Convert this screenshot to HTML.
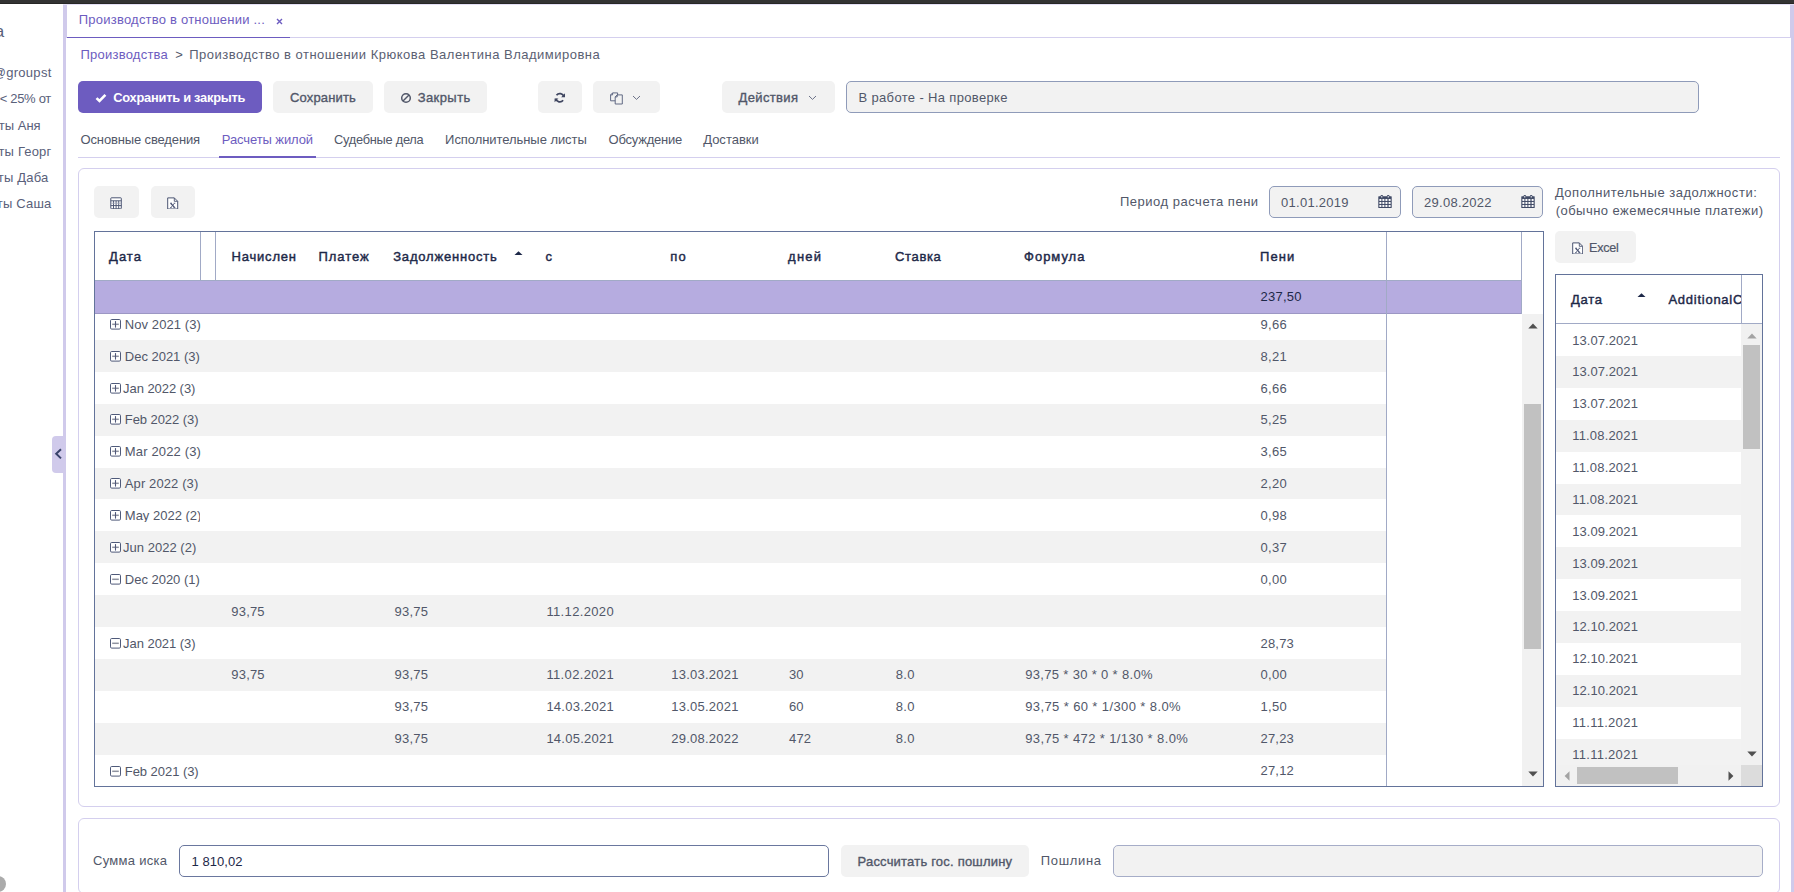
<!DOCTYPE html>
<html lang="ru"><head><meta charset="utf-8"><title>Производство</title>
<style>
html,body{margin:0;padding:0;background:#fff;}
html{width:1794px;height:892px;overflow:hidden;}
body{width:1794px;height:892px;position:relative;overflow:hidden;font-family:"Liberation Sans", sans-serif;}
div,span.t,svg{position:absolute;box-sizing:border-box;}
span.t{white-space:nowrap;display:block;}

</style></head><body>
<div style="left:0px;top:0px;width:1794px;height:3px;background:#333333;"></div>
<div style="left:0px;top:3px;width:1794px;height:1px;background:#272725;"></div>
<div style="left:63px;top:4px;width:4px;height:34px;background:#d0caeb;"></div>
<div style="left:63px;top:38px;width:3px;height:854px;background:#d0caeb;"></div>
<div style="left:1790px;top:4px;width:4px;height:33px;background:#d0caeb;"></div>
<div style="left:1791px;top:37px;width:3px;height:855px;background:#d0caeb;"></div>
<div style="left:63px;top:4px;width:1731px;height:1px;background:#e4e0f5;"></div>
<div style="left:67px;top:37px;width:1724px;height:1px;background:#d4cfee;"></div>
<div style="left:67px;top:37px;width:223px;height:1px;background:#6d5cc0;"></div>
<div style="left:52px;top:436px;width:11px;height:37px;background:#d0caeb;border-radius:4px 0 0 4px;"></div>
<svg style="left:54px;top:448px;" width="9" height="12" viewBox="0 0 9 12"><path d="M7 1.2 L2.2 5.8 L7 10.4" fill="none" stroke="#38426a" stroke-width="2"/></svg>
<div style="left:-10px;top:876px;width:16.4px;height:16px;background:#ababab;border-radius:8px;"></div>
<div style="left:0;top:4px;width:52px;height:500px;overflow:hidden;">
<span class="t" style="right:47.8px;top:19.23px;font-size:16.5px;line-height:16.5px;letter-spacing:0px;color:#59607a;">а</span>
<span class="t" style="right:0.40000000000000285px;top:62.00px;font-size:13px;line-height:13px;letter-spacing:0.3px;color:#59607a;">@groupst</span>
<span class="t" style="right:1.0000000000000029px;top:88.00px;font-size:13px;line-height:13px;letter-spacing:-0.3px;color:#59607a;">&lt; 25% от</span>
<span class="t" style="right:11.399999999999999px;top:115.00px;font-size:13px;line-height:13px;letter-spacing:0px;color:#59607a;">ты Аня</span>
<span class="t" style="right:0.5000000000000029px;top:141.00px;font-size:13px;line-height:13px;letter-spacing:0.2px;color:#59607a;">ты Георг</span>
<span class="t" style="right:3.5000000000000027px;top:167.00px;font-size:13px;line-height:13px;letter-spacing:0.2px;color:#59607a;">ты Даба</span>
<span class="t" style="right:0.5000000000000029px;top:193.00px;font-size:13px;line-height:13px;letter-spacing:0.2px;color:#59607a;">ты Саша</span>
</div>
<svg style="left:276px;top:18px;" width="7" height="7" viewBox="0 0 7 7"><path d="M1 1 L6 6 M6 1 L1 6" stroke="#6d5cc0" stroke-width="1.4" fill="none"/></svg>
<div style="left:78px;top:81px;width:184px;height:32px;background:#6d5cc0;border-radius:5px;"></div>
<svg style="left:94.6px;top:92.6px;" width="12" height="10" viewBox="0 0 12 10"><path d="M1.5 5.1 L4.5 8 L10.4 1.9" fill="none" stroke="#fff" stroke-width="2.6"/></svg>
<div style="left:273px;top:81px;width:100px;height:32px;background:#f2f2f2;border-radius:5px;"></div>
<div style="left:384px;top:81px;width:103px;height:32px;background:#f2f2f2;border-radius:5px;"></div>
<svg style="left:400px;top:92px;" width="12" height="12" viewBox="0 0 12 12"><circle cx="6" cy="6" r="4.3" fill="none" stroke="#515769" stroke-width="1.5"/><path d="M3 9 L9 3" stroke="#515769" stroke-width="1.5"/></svg>
<div style="left:538px;top:81px;width:44px;height:32px;background:#f2f2f2;border-radius:5px;"></div>
<svg style="left:554.3px;top:91.8px;" width="11.6" height="11.6" viewBox="0 0 12 12"><g fill="none" stroke="#3f4660" stroke-width="1.85"><path d="M10.2 5.0 A4.3 4.3 0 0 0 2.6 3.4"/><path d="M1.8 7.0 A4.3 4.3 0 0 0 9.4 8.6"/></g><path d="M11.4 1.4 V5.4 H7.4 Z M0.6 10.6 V6.6 H4.6 Z" fill="#3f4660"/></svg>
<div style="left:593px;top:81px;width:67px;height:32px;background:#f2f2f2;border-radius:5px;"></div>
<svg style="left:610px;top:91.6px;" width="13" height="13" viewBox="0 0 13 13"><g fill="#f2f2f2" stroke="#5b6380" stroke-width="0.95"><path d="M2.6 0.9 H7.6 V8.8 H0.6 V2.9 Z"/><path d="M0.6 2.9 H2.6 V0.9" fill="none"/><path d="M7.2 2.9 H12.3 V12 H5.2 V4.9 Z"/><path d="M5.2 4.9 H7.2 V2.9" fill="none"/></g></svg>
<svg style="left:632.3px;top:95.2px;" width="9" height="6" viewBox="0 0 9 6"><path d="M1 1 L4.5 4.4 L8 1" fill="none" stroke="#6b7188" stroke-width="1"/></svg>
<div style="left:722px;top:81px;width:113px;height:32px;background:#f2f2f2;border-radius:5px;"></div>
<svg style="left:808.3px;top:95.2px;" width="9" height="6" viewBox="0 0 9 6"><path d="M1 1 L4.5 4.4 L8 1" fill="none" stroke="#6b7188" stroke-width="1"/></svg>
<div style="left:846px;top:81px;width:853px;height:32px;background:#f2f2f2;border:1px solid #8f9bb9;border-radius:5px;"></div>
<div style="left:78px;top:157px;width:1702px;height:1px;background:#d4cfee;"></div>
<div style="left:219px;top:156.4px;width:97px;height:1.6px;background:#6d5cc0;"></div>
<div style="left:78px;top:168px;width:1702px;height:639px;border:1px solid #d4cfee;border-radius:6px;"></div>
<div style="left:78px;top:818px;width:1702px;height:74px;overflow:hidden;"><div style="left:0;top:0;width:1702px;height:76px;border:1px solid #d4cfee;border-radius:6px;"></div></div>
<div style="left:94px;top:186px;width:45px;height:32px;background:#f2f2f2;border-radius:5px;"></div>
<svg style="left:110px;top:196.7px;" width="12" height="12.4" viewBox="0 0 12 12.4"><rect x="0.8" y="0.8" width="10.5" height="11" rx="0.6" fill="#fff" stroke="#4b5472" stroke-width="1"/><path d="M0.8 3.8 H11.3 M0.8 8.6 H11.3 M3.5 3.8 V11.8 M6.1 3.8 V11.8 M8.7 3.8 V11.8" stroke="#4b5472" stroke-width="0.95" fill="none"/><path d="M0.8 6.2 H11.3" stroke="#9ea4b8" stroke-width="0.8" fill="none"/></svg>
<div style="left:151px;top:186px;width:44px;height:32px;background:#f2f2f2;border-radius:5px;"></div>
<svg style="left:167px;top:196.5px;" width="11.5" height="12.5" viewBox="0 0 11.5 12.5"><path d="M0.7 0.9 H7.3 L10.7 4.3 V12 H0.7 Z" fill="#fff" stroke="#4b5472" stroke-width="1"/><path d="M7.3 0.9 V4.3 H10.7" fill="none" stroke="#4b5472" stroke-width="0.9"/><path d="M3.7 6.2 L7.7 10.6" stroke="#4b5472" stroke-width="1.3" fill="none"/><path d="M7.6 6.2 L3.8 10.6" stroke="#4b5472" stroke-width="0.8" fill="none"/><path d="M3 6.2 H5 M6.6 6.2 H8.4 M3 10.6 H4.8 M6.4 10.6 H8.4" stroke="#4b5472" stroke-width="0.7" fill="none"/></svg>
<div style="left:1269px;top:186px;width:132px;height:32px;background:#f2f2f2;border:1px solid #8f9bb9;border-radius:5px;"></div>
<div style="left:1412px;top:186px;width:131px;height:32px;background:#f2f2f2;border:1px solid #8f9bb9;border-radius:5px;"></div>
<svg style="left:1378.3px;top:195px;" width="14" height="13" viewBox="0 0 14 13"><rect x="0.3" y="1.3" width="13.4" height="11.7" rx="0.5" fill="#3f4965"/><rect x="2.5" y="0" width="2.6" height="3.2" rx="1.2" fill="#3f4965"/><rect x="8.9" y="0" width="2.6" height="3.2" rx="1.2" fill="#3f4965"/><rect x="3.2" y="0.9" width="1.2" height="1.5" rx="0.5" fill="#f6f6f6"/><rect x="9.6" y="0.9" width="1.2" height="1.5" rx="0.5" fill="#f6f6f6"/><rect x="1.4" y="3.95" width="2" height="2" fill="#fcfcfc"/><rect x="4.4" y="3.95" width="2" height="2" fill="#fcfcfc"/><rect x="7.4" y="3.95" width="2" height="2" fill="#fcfcfc"/><rect x="10.6" y="3.95" width="2" height="2" fill="#fcfcfc"/><rect x="1.4" y="6.95" width="2" height="2" fill="#fcfcfc"/><rect x="4.4" y="6.95" width="2" height="2" fill="#fcfcfc"/><rect x="7.4" y="6.95" width="2" height="2" fill="#fcfcfc"/><rect x="10.6" y="6.95" width="2" height="2" fill="#fcfcfc"/><rect x="1.4" y="9.95" width="2" height="2" fill="#fcfcfc"/><rect x="4.4" y="9.95" width="2" height="2" fill="#fcfcfc"/><rect x="7.4" y="9.95" width="2" height="2" fill="#fcfcfc"/><rect x="10.6" y="9.95" width="2" height="2" fill="#fcfcfc"/></svg>
<svg style="left:1520.8px;top:195px;" width="14" height="13" viewBox="0 0 14 13"><rect x="0.3" y="1.3" width="13.4" height="11.7" rx="0.5" fill="#3f4965"/><rect x="2.5" y="0" width="2.6" height="3.2" rx="1.2" fill="#3f4965"/><rect x="8.9" y="0" width="2.6" height="3.2" rx="1.2" fill="#3f4965"/><rect x="3.2" y="0.9" width="1.2" height="1.5" rx="0.5" fill="#f6f6f6"/><rect x="9.6" y="0.9" width="1.2" height="1.5" rx="0.5" fill="#f6f6f6"/><rect x="1.4" y="3.95" width="2" height="2" fill="#fcfcfc"/><rect x="4.4" y="3.95" width="2" height="2" fill="#fcfcfc"/><rect x="7.4" y="3.95" width="2" height="2" fill="#fcfcfc"/><rect x="10.6" y="3.95" width="2" height="2" fill="#fcfcfc"/><rect x="1.4" y="6.95" width="2" height="2" fill="#fcfcfc"/><rect x="4.4" y="6.95" width="2" height="2" fill="#fcfcfc"/><rect x="7.4" y="6.95" width="2" height="2" fill="#fcfcfc"/><rect x="10.6" y="6.95" width="2" height="2" fill="#fcfcfc"/><rect x="1.4" y="9.95" width="2" height="2" fill="#fcfcfc"/><rect x="4.4" y="9.95" width="2" height="2" fill="#fcfcfc"/><rect x="7.4" y="9.95" width="2" height="2" fill="#fcfcfc"/><rect x="10.6" y="9.95" width="2" height="2" fill="#fcfcfc"/></svg>
<div style="left:1555px;top:231px;width:81px;height:32px;background:#f2f2f2;border-radius:5px;"></div>
<svg style="left:1571.6px;top:241.5px;" width="11.5" height="12.5" viewBox="0 0 11.5 12.5"><path d="M0.7 0.9 H7.3 L10.7 4.3 V12 H0.7 Z" fill="#fff" stroke="#4b5472" stroke-width="1"/><path d="M7.3 0.9 V4.3 H10.7" fill="none" stroke="#4b5472" stroke-width="0.9"/><path d="M3.7 6.2 L7.7 10.6" stroke="#4b5472" stroke-width="1.3" fill="none"/><path d="M7.6 6.2 L3.8 10.6" stroke="#4b5472" stroke-width="0.8" fill="none"/><path d="M3 6.2 H5 M6.6 6.2 H8.4 M3 10.6 H4.8 M6.4 10.6 H8.4" stroke="#4b5472" stroke-width="0.7" fill="none"/></svg>
<div style="left:94px;top:231px;width:1450px;height:556px;border:1px solid #63739a;overflow:hidden;background:#fff;">
<div style="left:0.00px;top:108.00px;width:1291px;height:31.90px;background:#f2f2f2;"></div>
<div style="left:0.00px;top:171.80px;width:1291px;height:31.90px;background:#f2f2f2;"></div>
<div style="left:0.00px;top:235.60px;width:1291px;height:31.90px;background:#f2f2f2;"></div>
<div style="left:0.00px;top:299.40px;width:1291px;height:31.90px;background:#f2f2f2;"></div>
<div style="left:0.00px;top:363.20px;width:1291px;height:31.90px;background:#f2f2f2;"></div>
<div style="left:0.00px;top:427.00px;width:1291px;height:31.90px;background:#f2f2f2;"></div>
<div style="left:0.00px;top:490.80px;width:1291px;height:31.90px;background:#f2f2f2;"></div>
<div style="left:1427.00px;top:81.00px;width:22px;height:474.00px;background:#f1f1f1;"></div>
<div style="left:1429.00px;top:172.00px;width:17px;height:244.50px;background:#c1c1c1;"></div>
<div style="left:0.00px;top:0.00px;width:1427px;height:48.00px;background:#fff;"></div>
<div style="left:0.00px;top:48.00px;width:1427px;height:34.00px;background:#b6ace0;"></div>
<div style="left:1427.00px;top:0.00px;width:22px;height:81.50px;background:#fff;"></div>
<div style="left:0.00px;top:48.00px;width:1427px;height:1.00px;background:#a1aac6;"></div>
<div style="left:0.00px;top:81.00px;width:1427px;height:1.00px;background:#9c97c4;"></div>
<div style="left:105.00px;top:0.00px;width:1px;height:48.00px;background:#a1aac6;"></div>
<div style="left:120.00px;top:0.00px;width:1px;height:48.00px;background:#a1aac6;"></div>
<div style="left:1291.00px;top:0.00px;width:1px;height:555.00px;background:#a1aac6;"></div>
<div style="left:1426.00px;top:0.00px;width:1px;height:82.00px;background:#a1aac6;"></div>
</div>
<svg style="left:1527.5px;top:323px;" width="10" height="6" viewBox="0 0 10 6"><path d="M0.3 5.5 L5 0.6 L9.7 5.5 Z" fill="#505050"/></svg>
<svg style="left:1527.5px;top:771.2px;" width="10" height="6" viewBox="0 0 10 6"><path d="M0.3 0.5 L5 5.4 L9.7 0.5 Z" fill="#505050"/></svg>
<svg style="left:514px;top:250.6px;" width="9" height="4.5" viewBox="0 0 9 4.5"><path d="M0.2 4.3 L4.5 0.2 L8.8 4.3 Z" fill="#1d2848"/></svg>
<svg style="left:110px;top:319px;" width="11" height="11" viewBox="0 0 11 11"><rect x="0.5" y="0.5" width="10" height="9.6" rx="1.2" fill="#fff" stroke="#4f5a7a" stroke-width="1"/><path d="M2.2 5.3 H8.8" stroke="#8f93a0" stroke-width="1.5"/><path d="M5.5 2.1 V8.6" stroke="#50587a" stroke-width="1.1"/></svg>
<svg style="left:110px;top:351px;" width="11" height="11" viewBox="0 0 11 11"><rect x="0.5" y="0.5" width="10" height="9.6" rx="1.2" fill="#fff" stroke="#4f5a7a" stroke-width="1"/><path d="M2.2 5.3 H8.8" stroke="#8f93a0" stroke-width="1.5"/><path d="M5.5 2.1 V8.6" stroke="#50587a" stroke-width="1.1"/></svg>
<svg style="left:110px;top:383px;" width="11" height="11" viewBox="0 0 11 11"><rect x="0.5" y="0.5" width="10" height="9.6" rx="1.2" fill="#fff" stroke="#4f5a7a" stroke-width="1"/><path d="M2.2 5.3 H8.8" stroke="#8f93a0" stroke-width="1.5"/><path d="M5.5 2.1 V8.6" stroke="#50587a" stroke-width="1.1"/></svg>
<svg style="left:110px;top:414px;" width="11" height="11" viewBox="0 0 11 11"><rect x="0.5" y="0.5" width="10" height="9.6" rx="1.2" fill="#fff" stroke="#4f5a7a" stroke-width="1"/><path d="M2.2 5.3 H8.8" stroke="#8f93a0" stroke-width="1.5"/><path d="M5.5 2.1 V8.6" stroke="#50587a" stroke-width="1.1"/></svg>
<svg style="left:110px;top:446px;" width="11" height="11" viewBox="0 0 11 11"><rect x="0.5" y="0.5" width="10" height="9.6" rx="1.2" fill="#fff" stroke="#4f5a7a" stroke-width="1"/><path d="M2.2 5.3 H8.8" stroke="#8f93a0" stroke-width="1.5"/><path d="M5.5 2.1 V8.6" stroke="#50587a" stroke-width="1.1"/></svg>
<svg style="left:110px;top:478px;" width="11" height="11" viewBox="0 0 11 11"><rect x="0.5" y="0.5" width="10" height="9.6" rx="1.2" fill="#fff" stroke="#4f5a7a" stroke-width="1"/><path d="M2.2 5.3 H8.8" stroke="#8f93a0" stroke-width="1.5"/><path d="M5.5 2.1 V8.6" stroke="#50587a" stroke-width="1.1"/></svg>
<svg style="left:110px;top:510px;" width="11" height="11" viewBox="0 0 11 11"><rect x="0.5" y="0.5" width="10" height="9.6" rx="1.2" fill="#fff" stroke="#4f5a7a" stroke-width="1"/><path d="M2.2 5.3 H8.8" stroke="#8f93a0" stroke-width="1.5"/><path d="M5.5 2.1 V8.6" stroke="#50587a" stroke-width="1.1"/></svg>
<svg style="left:110px;top:542px;" width="11" height="11" viewBox="0 0 11 11"><rect x="0.5" y="0.5" width="10" height="9.6" rx="1.2" fill="#fff" stroke="#4f5a7a" stroke-width="1"/><path d="M2.2 5.3 H8.8" stroke="#8f93a0" stroke-width="1.5"/><path d="M5.5 2.1 V8.6" stroke="#50587a" stroke-width="1.1"/></svg>
<svg style="left:110px;top:574px;" width="11" height="11" viewBox="0 0 11 11"><rect x="0.5" y="0.5" width="10" height="9.6" rx="1.2" fill="#fff" stroke="#4f5a7a" stroke-width="1"/><path d="M2.2 5.3 H8.8" stroke="#8f93a0" stroke-width="1.5"/></svg>
<svg style="left:110px;top:638px;" width="11" height="11" viewBox="0 0 11 11"><rect x="0.5" y="0.5" width="10" height="9.6" rx="1.2" fill="#fff" stroke="#4f5a7a" stroke-width="1"/><path d="M2.2 5.3 H8.8" stroke="#8f93a0" stroke-width="1.5"/></svg>
<svg style="left:110px;top:766px;" width="11" height="11" viewBox="0 0 11 11"><rect x="0.5" y="0.5" width="10" height="9.6" rx="1.2" fill="#fff" stroke="#4f5a7a" stroke-width="1"/><path d="M2.2 5.3 H8.8" stroke="#8f93a0" stroke-width="1.5"/></svg>
<div style="left:1555px;top:274px;width:208px;height:513px;border:1px solid #63739a;overflow:hidden;background:#fff;">
<div style="left:0.00px;top:80.90px;width:185px;height:31.90px;background:#f2f2f2;"></div>
<div style="left:0.00px;top:144.70px;width:185px;height:31.90px;background:#f2f2f2;"></div>
<div style="left:0.00px;top:208.50px;width:185px;height:31.90px;background:#f2f2f2;"></div>
<div style="left:0.00px;top:272.30px;width:185px;height:31.90px;background:#f2f2f2;"></div>
<div style="left:0.00px;top:336.10px;width:185px;height:31.90px;background:#f2f2f2;"></div>
<div style="left:0.00px;top:399.90px;width:185px;height:31.90px;background:#f2f2f2;"></div>
<div style="left:0.00px;top:463.70px;width:185px;height:31.90px;background:#f2f2f2;"></div>
<div style="left:0.00px;top:48.00px;width:206px;height:1.00px;background:#a1aac6;"></div>
<div style="left:185.00px;top:0.00px;width:1px;height:48.00px;background:#a1aac6;"></div>
<div style="left:185.00px;top:49.00px;width:21px;height:463.00px;background:#f1f1f1;"></div>
<div style="left:187.00px;top:70.00px;width:17px;height:104.00px;background:#c1c1c1;"></div>
<div style="left:0.00px;top:490.00px;width:185px;height:22.00px;background:#f1f1f1;"></div>
<div style="left:185.00px;top:490.00px;width:21px;height:22.00px;background:#dcdcdc;"></div>
<div style="left:21.00px;top:492.00px;width:101px;height:17.00px;background:#c1c1c1;"></div>
</div>
<svg style="left:1746.5px;top:332.8px;" width="10" height="6" viewBox="0 0 10 6"><path d="M0.3 5.5 L5 0.6 L9.7 5.5 Z" fill="#a3a3a3"/></svg>
<svg style="left:1746.5px;top:750.6px;" width="10" height="6" viewBox="0 0 10 6"><path d="M0.3 0.5 L5 5.4 L9.7 0.5 Z" fill="#505050"/></svg>
<svg style="left:1563.5px;top:771px;" width="6" height="10" viewBox="0 0 6 10"><path d="M5.5 0.3 L0.6 5 L5.5 9.7 Z" fill="#a3a3a3"/></svg>
<svg style="left:1728px;top:771px;" width="6" height="10" viewBox="0 0 6 10"><path d="M0.5 0.3 L5.4 5 L0.5 9.7 Z" fill="#505050"/></svg>
<svg style="left:1637.2px;top:292.8px;" width="9" height="4.5" viewBox="0 0 9 4.5"><path d="M0.2 4.3 L4.5 0.2 L8.8 4.3 Z" fill="#1d2848"/></svg>
<div style="left:179px;top:845px;width:650px;height:32px;background:#fff;border:1px solid #6a779e;border-radius:5px;"></div>
<div style="left:841px;top:845px;width:188px;height:32px;background:#f2f2f2;border-radius:5px;"></div>
<div style="left:1113px;top:845px;width:650px;height:32px;background:#f2f2f2;border:1px solid #a6adc8;border-radius:5px;"></div>
<span class="t" id="t0" style="left:78.80px;top:13.01px;font-size:13px;line-height:13px;color:#6d5cc0;letter-spacing:0.222px;">Производство в отношении ...</span>
<span class="t" id="t1" style="left:80.50px;top:48.01px;font-size:13px;line-height:13px;color:#6d5cc0;letter-spacing:0.230px;">Производства</span>
<span class="t" id="t2" style="left:175.20px;top:48.01px;font-size:13px;line-height:13px;color:#515769;">&gt;</span>
<span class="t" id="t3" style="left:189.20px;top:48.01px;font-size:13px;line-height:13px;color:#5a6072;letter-spacing:0.495px;">Производство в отношении Крюкова Валентина Владимировна</span>
<span class="t" id="t4" style="left:113.30px;top:92.01px;font-size:12.85px;line-height:12.85px;font-weight:bold;color:#fff;letter-spacing:-0.250px;">Сохранить и закрыть</span>
<span class="t" id="t5" style="left:289.90px;top:91.01px;font-size:13px;line-height:13px;color:#515769;letter-spacing:0.174px;-webkit-text-stroke:0.35px #515769;">Сохранить</span>
<span class="t" id="t6" style="left:417.70px;top:91.01px;font-size:13px;line-height:13px;color:#515769;letter-spacing:0.420px;-webkit-text-stroke:0.35px #515769;">Закрыть</span>
<span class="t" id="t7" style="left:738.50px;top:91.01px;font-size:13px;line-height:13px;color:#515769;letter-spacing:0.362px;-webkit-text-stroke:0.35px #515769;">Действия</span>
<span class="t" id="t8" style="left:858.50px;top:91.01px;font-size:13px;line-height:13px;color:#515769;letter-spacing:0.345px;">В работе - На проверке</span>
<span class="t" id="t9" style="left:80.50px;top:133.01px;font-size:13px;line-height:13px;color:#515769;letter-spacing:-0.137px;">Основные сведения</span>
<span class="t" id="t10" style="left:221.80px;top:133.01px;font-size:13px;line-height:13px;color:#6d5cc0;letter-spacing:-0.100px;">Расчеты жилой</span>
<span class="t" id="t11" style="left:334.10px;top:134.01px;font-size:12.79px;line-height:12.79px;color:#515769;letter-spacing:-0.250px;">Судебные дела</span>
<span class="t" id="t12" style="left:445.10px;top:133.01px;font-size:13px;line-height:13px;color:#515769;letter-spacing:-0.060px;">Исполнительные листы</span>
<span class="t" id="t13" style="left:608.50px;top:133.01px;font-size:13px;line-height:13px;color:#515769;letter-spacing:-0.217px;">Обсуждение</span>
<span class="t" id="t14" style="left:703.20px;top:133.01px;font-size:13px;line-height:13px;color:#515769;letter-spacing:0.003px;">Доставки</span>
<span class="t" id="t15" style="left:1120.00px;top:195.01px;font-size:13px;line-height:13px;color:#515769;letter-spacing:0.508px;">Период расчета пени</span>
<span class="t" id="t16" style="left:1281.10px;top:196.01px;font-size:13px;line-height:13px;color:#515769;letter-spacing:0.258px;">01.01.2019</span>
<span class="t" id="t17" style="left:1424.10px;top:196.01px;font-size:13px;line-height:13px;color:#515769;letter-spacing:0.258px;">29.08.2022</span>
<span class="t" id="t18" style="left:1554.90px;top:186.01px;font-size:13px;line-height:13px;color:#515769;letter-spacing:0.524px;">Дополнительные задолжности:</span>
<span class="t" id="t19" style="left:1555.70px;top:204.01px;font-size:13px;line-height:13px;color:#515769;letter-spacing:0.465px;">(обычно ежемесячные платежи)</span>
<span class="t" id="t20" style="left:1589.00px;top:242.01px;font-size:12.63px;line-height:12.63px;color:#515769;letter-spacing:-0.250px;-webkit-text-stroke:0.2px #515769;">Excel</span>
<span class="t" id="t21" style="left:109.10px;top:250.01px;font-size:13px;line-height:13px;color:#1d2848;letter-spacing:1.001px;-webkit-text-stroke:0.42px #1d2848;">Дата</span>
<span class="t" id="t22" style="left:231.50px;top:250.01px;font-size:13px;line-height:13px;color:#1d2848;letter-spacing:0.804px;-webkit-text-stroke:0.42px #1d2848;">Начислен</span>
<span class="t" id="t23" style="left:318.40px;top:250.01px;font-size:13px;line-height:13px;color:#1d2848;letter-spacing:0.966px;-webkit-text-stroke:0.42px #1d2848;">Платеж</span>
<span class="t" id="t24" style="left:393.20px;top:250.01px;font-size:13px;line-height:13px;color:#1d2848;letter-spacing:0.804px;-webkit-text-stroke:0.42px #1d2848;">Задолженность</span>
<span class="t" id="t25" style="left:545.40px;top:250.01px;font-size:13px;line-height:13px;color:#1d2848;-webkit-text-stroke:0.42px #1d2848;">с</span>
<span class="t" id="t26" style="left:670.30px;top:250.01px;font-size:13px;line-height:13px;color:#1d2848;letter-spacing:1.200px;-webkit-text-stroke:0.42px #1d2848;">по</span>
<span class="t" id="t27" style="left:788.10px;top:250.01px;font-size:13px;line-height:13px;color:#1d2848;letter-spacing:1.200px;-webkit-text-stroke:0.42px #1d2848;">дней</span>
<span class="t" id="t28" style="left:895.00px;top:250.01px;font-size:13px;line-height:13px;color:#1d2848;letter-spacing:0.651px;-webkit-text-stroke:0.42px #1d2848;">Ставка</span>
<span class="t" id="t29" style="left:1024.10px;top:250.01px;font-size:13px;line-height:13px;color:#1d2848;letter-spacing:0.972px;-webkit-text-stroke:0.42px #1d2848;">Формула</span>
<span class="t" id="t30" style="left:1260.10px;top:250.01px;font-size:13px;line-height:13px;color:#1d2848;letter-spacing:1.028px;-webkit-text-stroke:0.42px #1d2848;">Пени</span>
<span class="t" id="t31" style="left:1260.60px;top:290.01px;font-size:13px;line-height:13px;color:#1d2848;letter-spacing:0.227px;">237,50</span>
<span class="t" id="t32" style="left:124.80px;top:318.01px;font-size:13px;line-height:13px;color:#515769;letter-spacing:0.077px;">Nov 2021 (3)</span>
<span class="t" id="t33" style="left:1260.50px;top:318.01px;font-size:13px;line-height:13px;color:#515769;letter-spacing:0.329px;">9,66</span>
<span class="t" id="t34" style="left:124.80px;top:350.01px;font-size:13px;line-height:13px;color:#515769;letter-spacing:-0.014px;">Dec 2021 (3)</span>
<span class="t" id="t35" style="left:1260.50px;top:350.01px;font-size:13px;line-height:13px;color:#515769;letter-spacing:0.329px;">8,21</span>
<span class="t" id="t36" style="left:123.10px;top:382.01px;font-size:13px;line-height:13px;color:#515769;letter-spacing:-0.064px;">Jan 2022 (3)</span>
<span class="t" id="t37" style="left:1260.50px;top:382.01px;font-size:13px;line-height:13px;color:#515769;letter-spacing:0.329px;">6,66</span>
<span class="t" id="t38" style="left:124.80px;top:413.01px;font-size:13px;line-height:13px;color:#515769;letter-spacing:-0.067px;">Feb 2022 (3)</span>
<span class="t" id="t39" style="left:1260.50px;top:413.01px;font-size:13px;line-height:13px;color:#515769;letter-spacing:0.329px;">5,25</span>
<span class="t" id="t40" style="left:124.80px;top:445.01px;font-size:13px;line-height:13px;color:#515769;letter-spacing:0.153px;">Mar 2022 (3)</span>
<span class="t" id="t41" style="left:1260.50px;top:445.01px;font-size:13px;line-height:13px;color:#515769;letter-spacing:0.329px;">3,65</span>
<span class="t" id="t42" style="left:124.80px;top:477.01px;font-size:13px;line-height:13px;color:#515769;letter-spacing:0.112px;">Apr 2022 (3)</span>
<span class="t" id="t43" style="left:1260.50px;top:477.01px;font-size:13px;line-height:13px;color:#515769;letter-spacing:0.329px;">2,20</span>
<span class="t" id="t44" style="left:124.80px;top:509.01px;font-size:13px;line-height:13px;color:#515769;width:75px;overflow:hidden;">May 2022 (2)</span>
<span class="t" id="t45" style="left:1260.50px;top:509.01px;font-size:13px;line-height:13px;color:#515769;letter-spacing:0.329px;">0,98</span>
<span class="t" id="t46" style="left:123.10px;top:541.01px;font-size:13px;line-height:13px;color:#515769;letter-spacing:0.018px;">Jun 2022 (2)</span>
<span class="t" id="t47" style="left:1260.50px;top:541.01px;font-size:13px;line-height:13px;color:#515769;letter-spacing:0.329px;">0,37</span>
<span class="t" id="t48" style="left:124.80px;top:573.01px;font-size:13px;line-height:13px;color:#515769;letter-spacing:-0.014px;">Dec 2020 (1)</span>
<span class="t" id="t49" style="left:1260.50px;top:573.01px;font-size:13px;line-height:13px;color:#515769;letter-spacing:0.329px;">0,00</span>
<span class="t" id="t50" style="left:123.10px;top:637.01px;font-size:13px;line-height:13px;color:#515769;letter-spacing:-0.045px;">Jan 2021 (3)</span>
<span class="t" id="t51" style="left:1260.50px;top:637.01px;font-size:13px;line-height:13px;color:#515769;letter-spacing:0.188px;">28,73</span>
<span class="t" id="t52" style="left:124.80px;top:765.01px;font-size:13px;line-height:13px;color:#515769;letter-spacing:-0.049px;">Feb 2021 (3)</span>
<span class="t" id="t53" style="left:1260.50px;top:764.01px;font-size:13px;line-height:13px;color:#515769;letter-spacing:0.188px;">27,12</span>
<span class="t" id="t54" style="left:231.30px;top:605.01px;font-size:13px;line-height:13px;color:#515769;letter-spacing:0.188px;">93,75</span>
<span class="t" id="t55" style="left:394.60px;top:605.01px;font-size:13px;line-height:13px;color:#515769;letter-spacing:0.188px;">93,75</span>
<span class="t" id="t56" style="left:546.40px;top:605.01px;font-size:13px;line-height:13px;color:#515769;letter-spacing:0.355px;">11.12.2020</span>
<span class="t" id="t57" style="left:231.30px;top:668.01px;font-size:13px;line-height:13px;color:#515769;letter-spacing:0.188px;">93,75</span>
<span class="t" id="t58" style="left:394.60px;top:668.01px;font-size:13px;line-height:13px;color:#515769;letter-spacing:0.188px;">93,75</span>
<span class="t" id="t59" style="left:546.40px;top:668.01px;font-size:13px;line-height:13px;color:#515769;letter-spacing:0.355px;">11.02.2021</span>
<span class="t" id="t60" style="left:671.20px;top:668.01px;font-size:13px;line-height:13px;color:#515769;letter-spacing:0.247px;">13.03.2021</span>
<span class="t" id="t61" style="left:789.10px;top:668.01px;font-size:13px;line-height:13px;color:#515769;letter-spacing:0.031px;">30</span>
<span class="t" id="t62" style="left:895.80px;top:668.01px;font-size:13px;line-height:13px;color:#515769;letter-spacing:0.261px;">8.0</span>
<span class="t" id="t63" style="left:1025.20px;top:668.01px;font-size:13px;line-height:13px;color:#515769;letter-spacing:0.335px;">93,75 * 30 * 0 * 8.0%</span>
<span class="t" id="t64" style="left:1260.50px;top:668.01px;font-size:13px;line-height:13px;color:#515769;letter-spacing:0.329px;">0,00</span>
<span class="t" id="t65" style="left:394.60px;top:700.01px;font-size:13px;line-height:13px;color:#515769;letter-spacing:0.188px;">93,75</span>
<span class="t" id="t66" style="left:546.40px;top:700.01px;font-size:13px;line-height:13px;color:#515769;letter-spacing:0.247px;">14.03.2021</span>
<span class="t" id="t67" style="left:671.20px;top:700.01px;font-size:13px;line-height:13px;color:#515769;letter-spacing:0.247px;">13.05.2021</span>
<span class="t" id="t68" style="left:789.10px;top:700.01px;font-size:13px;line-height:13px;color:#515769;letter-spacing:0.031px;">60</span>
<span class="t" id="t69" style="left:895.80px;top:700.01px;font-size:13px;line-height:13px;color:#515769;letter-spacing:0.261px;">8.0</span>
<span class="t" id="t70" style="left:1025.20px;top:700.01px;font-size:13px;line-height:13px;color:#515769;letter-spacing:0.391px;">93,75 * 60 * 1/300 * 8.0%</span>
<span class="t" id="t71" style="left:1260.50px;top:700.01px;font-size:13px;line-height:13px;color:#515769;letter-spacing:0.329px;">1,50</span>
<span class="t" id="t72" style="left:394.60px;top:732.01px;font-size:13px;line-height:13px;color:#515769;letter-spacing:0.188px;">93,75</span>
<span class="t" id="t73" style="left:546.40px;top:732.01px;font-size:13px;line-height:13px;color:#515769;letter-spacing:0.247px;">14.05.2021</span>
<span class="t" id="t74" style="left:671.20px;top:732.01px;font-size:13px;line-height:13px;color:#515769;letter-spacing:0.247px;">29.08.2022</span>
<span class="t" id="t75" style="left:789.10px;top:732.01px;font-size:13px;line-height:13px;color:#515769;letter-spacing:0.148px;">472</span>
<span class="t" id="t76" style="left:895.80px;top:732.01px;font-size:13px;line-height:13px;color:#515769;letter-spacing:0.261px;">8.0</span>
<span class="t" id="t77" style="left:1025.20px;top:732.01px;font-size:13px;line-height:13px;color:#515769;letter-spacing:0.375px;">93,75 * 472 * 1/130 * 8.0%</span>
<span class="t" id="t78" style="left:1260.50px;top:732.01px;font-size:13px;line-height:13px;color:#515769;letter-spacing:0.188px;">27,23</span>
<span class="t" id="t79" style="left:1570.90px;top:293.01px;font-size:13px;line-height:13px;color:#1d2848;letter-spacing:0.801px;-webkit-text-stroke:0.42px #1d2848;">Дата</span>
<span class="t" id="t80" style="left:1668.40px;top:293.01px;font-size:13px;line-height:13px;color:#1d2848;letter-spacing:0.750px;-webkit-text-stroke:0.42px #1d2848;width:72.5px;overflow:hidden;">AdditionalC</span>
<span class="t" id="t81" style="left:1572.20px;top:334.01px;font-size:13px;line-height:13px;color:#515769;letter-spacing:0.069px;">13.07.2021</span>
<span class="t" id="t82" style="left:1572.20px;top:365.01px;font-size:13px;line-height:13px;color:#515769;letter-spacing:0.069px;">13.07.2021</span>
<span class="t" id="t83" style="left:1572.20px;top:397.01px;font-size:13px;line-height:13px;color:#515769;letter-spacing:0.069px;">13.07.2021</span>
<span class="t" id="t84" style="left:1572.20px;top:429.01px;font-size:13px;line-height:13px;color:#515769;letter-spacing:0.177px;">11.08.2021</span>
<span class="t" id="t85" style="left:1572.20px;top:461.01px;font-size:13px;line-height:13px;color:#515769;letter-spacing:0.177px;">11.08.2021</span>
<span class="t" id="t86" style="left:1572.20px;top:493.01px;font-size:13px;line-height:13px;color:#515769;letter-spacing:0.177px;">11.08.2021</span>
<span class="t" id="t87" style="left:1572.20px;top:525.01px;font-size:13px;line-height:13px;color:#515769;letter-spacing:0.069px;">13.09.2021</span>
<span class="t" id="t88" style="left:1572.20px;top:557.01px;font-size:13px;line-height:13px;color:#515769;letter-spacing:0.069px;">13.09.2021</span>
<span class="t" id="t89" style="left:1572.20px;top:589.01px;font-size:13px;line-height:13px;color:#515769;letter-spacing:0.069px;">13.09.2021</span>
<span class="t" id="t90" style="left:1572.20px;top:620.01px;font-size:13px;line-height:13px;color:#515769;letter-spacing:0.069px;">12.10.2021</span>
<span class="t" id="t91" style="left:1572.20px;top:652.01px;font-size:13px;line-height:13px;color:#515769;letter-spacing:0.069px;">12.10.2021</span>
<span class="t" id="t92" style="left:1572.20px;top:684.01px;font-size:13px;line-height:13px;color:#515769;letter-spacing:0.069px;">12.10.2021</span>
<span class="t" id="t93" style="left:1572.20px;top:716.01px;font-size:13px;line-height:13px;color:#515769;letter-spacing:0.284px;">11.11.2021</span>
<span class="t" id="t94" style="left:1572.20px;top:748.01px;font-size:13px;line-height:13px;color:#515769;letter-spacing:0.284px;">11.11.2021</span>
<span class="t" id="t95" style="left:93.10px;top:854.01px;font-size:13px;line-height:13px;color:#515769;letter-spacing:0.263px;">Сумма иска</span>
<span class="t" id="t96" style="left:191.40px;top:855.01px;font-size:13px;line-height:13px;color:#1d2848;letter-spacing:0.084px;">1 810,02</span>
<span class="t" id="t97" style="left:857.50px;top:855.01px;font-size:13px;line-height:13px;color:#515769;letter-spacing:0.205px;-webkit-text-stroke:0.35px #515769;">Рассчитать гос. пошлину</span>
<span class="t" id="t98" style="left:1040.80px;top:854.01px;font-size:13px;line-height:13px;color:#515769;letter-spacing:0.672px;">Пошлина</span>
</body></html>
